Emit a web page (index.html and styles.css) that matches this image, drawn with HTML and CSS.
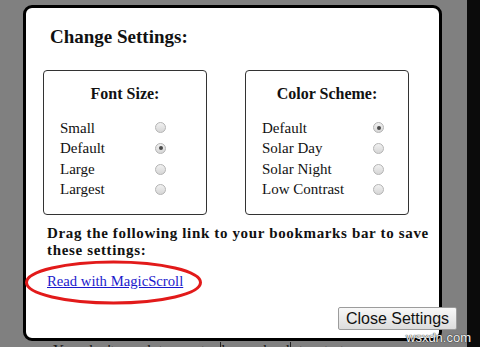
FILE: index.html
```html
<!DOCTYPE html>
<html lang="en">
<head>
    <meta charset="UTF-8">
    <meta name="viewport" content="width=device-width, initial-scale=1.0">
    <title>MagicScroll - Change Settings</title>
    <link rel="stylesheet" href="styles.css">
</head>
<body>
    <div class="screen">
        <div class="page">
            <div class="modal">
                <h2 class="modal-title">Change Settings:</h2>

                <div class="option-boxes">
                    <div class="option-box option-box-font">
                        <h3>Font Size:</h3>
                        <ul class="option-list">
                            <li class="option"><label for="fs-small">Small</label><input type="radio" name="fontsize" id="fs-small"></li>
                            <li class="option"><label for="fs-default">Default</label><input type="radio" name="fontsize" id="fs-default" checked></li>
                            <li class="option"><label for="fs-large">Large</label><input type="radio" name="fontsize" id="fs-large"></li>
                            <li class="option"><label for="fs-largest">Largest</label><input type="radio" name="fontsize" id="fs-largest"></li>
                        </ul>
                    </div>
                    <div class="option-box option-box-color">
                        <h3>Color Scheme:</h3>
                        <ul class="option-list">
                            <li class="option"><label for="cs-default">Default</label><input type="radio" name="scheme" id="cs-default" checked></li>
                            <li class="option"><label for="cs-day">Solar Day</label><input type="radio" name="scheme" id="cs-day"></li>
                            <li class="option"><label for="cs-night">Solar Night</label><input type="radio" name="scheme" id="cs-night"></li>
                            <li class="option"><label for="cs-low">Low Contrast</label><input type="radio" name="scheme" id="cs-low"></li>
                        </ul>
                    </div>
                </div>

                <p class="drag-note">Drag the following link to your bookmarks bar to save these settings:</p>
                <div class="bookmarklet-line"><a href="#" class="bookmarklet">Read with MagicScroll</a></div>

                <!-- red marker drawn round the link -->
                <svg class="circle-mark" width="180" height="46" viewBox="0 0 180 46">
                    <ellipse cx="89.5" cy="22.5" rx="87" ry="20.5" fill="none" stroke="#e21a1a" stroke-width="3"/>
                </svg>

                <button class="close-btn">Close Settings</button>
            </div>
            <p class="page-text">You don't need to go to <span class="hl">law school</span> to start your own</p>
        </div>
        <div class="side"></div>
    </div>
    <span class="watermark">wsxdn.com</span>
</body>
</html>
```

FILE: styles.css
```css
html, body {
    margin: 0;
    height: 347px;
    overflow: hidden;
}
body {
    font-family: "Liberation Serif", "DejaVu Serif", serif;
    color: #111;
    background: #808080;
    position: relative;
}
.screen {
    display: flex;
    height: 347px;
}
.page {
    flex: 1;
    background: #808080;
    padding: 5px 0 0 23px;
}
.side {
    width: 13px;
    background: #0b0b0b;
}
.modal {
    position: relative;
    box-sizing: border-box;
    width: 419px;
    height: 336px;
    background: #fff;
    border: 3px solid #000;
    border-radius: 9px;
    padding: 18px 17px 0;
}
.modal-title {
    margin: 0 0 22px 7px;
    font-size: 19px;
    line-height: 22px;
    font-weight: bold;
}
.option-boxes {
    display: flex;
    gap: 38px;
}
.option-box {
    box-sizing: border-box;
    width: 164px;
    height: 145px;
    border: 1px solid #333;
    border-radius: 4px;
    padding: 13px 0 0 16px;
}
.option-box h3 {
    margin: 0 0 13.5px -16px;
    text-align: center;
    font-size: 16px;
    line-height: 20px;
}
.option-list {
    list-style: none;
    margin: 0;
    padding: 0;
}
.option-box-font .option-list {
    padding-right: 40px;
}
.option-box-color .option-list {
    padding-right: 24px;
}
.option {
    display: flex;
    justify-content: space-between;
    align-items: center;
    height: 20.67px;
    font-size: 15px;
    line-height: 20.67px;
}
.option input {
    appearance: none;
    -webkit-appearance: none;
    margin: 0;
    width: 11px;
    height: 11px;
    border: 1px solid #b4b4b4;
    border-radius: 50%;
    background: linear-gradient(#f1f1f1, #d6d6d6);
    box-sizing: border-box;
    position: relative;
}
.option input:checked::after {
    content: "";
    position: absolute;
    left: 2.5px;
    top: 2.5px;
    width: 4px;
    height: 4px;
    border-radius: 50%;
    background: #4a4a4a;
}
.drag-note {
    margin: 10px 0 0 4px;
    width: 384px;
    font-size: 15px;
    letter-spacing: 0.65px;
    line-height: 17px;
    font-weight: bold;
}
.bookmarklet-line {
    margin: 13px 0 0 4px;
    font-size: 14.7px;
    line-height: 18px;
}
.bookmarklet {
    color: #1a1acc;
}
.circle-mark {
    position: absolute;
    left: -2px;
    top: 252px;
}
.close-btn {
    position: absolute;
    left: 312px;
    top: 299px;
    width: 119px;
    height: 23px;
    padding: 0;
    font-family: "Liberation Sans", Arial, sans-serif;
    font-size: 16px;
    color: #111;
    background: linear-gradient(#f8f8f8, #dcdcdc);
    border: 1px solid #9c9c9c;
    border-radius: 2px;
}
.page-text {
    margin: 0 0 0 30px;
    width: 360px;
    font-size: 15px;
    line-height: 18px;
    text-align: justify;
    text-align-last: justify;
    color: #151515;
}
.hl {
    border-left: 1px solid #222;
    border-right: 1px solid #222;
}
.watermark {
    position: absolute;
    left: 406px;
    top: 330px;
    font-family: "Liberation Sans", Arial, sans-serif;
    font-size: 13px;
    color: #f2f2f2;
    text-shadow: 0 0 1px #222, 0 0 1px #222;
}
```
